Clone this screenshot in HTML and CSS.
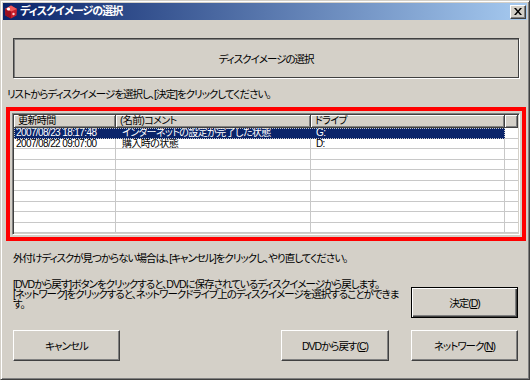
FILE: index.html
```html
<!DOCTYPE html>
<html lang="ja">
<head>
<meta charset="utf-8">
<link rel="stylesheet" href="styles.css">
</head>
<body>
<div class="window">
  <div class="titlebar">
    <svg class="appicon" width="14" height="14" viewBox="0 0 14 14">
      <polygon points="7,0.5 13,4 12.5,10.5 7,13.5 1.5,10.5 1,4" fill="#c81e2a"/>
      <polygon points="7,0.5 13,4 7,6.5 1,4" fill="#f05a5a"/>
      <polygon points="1,4 7,6.5 7,13.5 1.5,10.5" fill="#9a1020"/>
      <circle cx="4.5" cy="4" r="1.6" fill="#fff"/>
      <circle cx="9.5" cy="9" r="1.2" fill="#ffd0d0"/>
    </svg>
    <span class="title">ディスクイメージの選択</span>
    <span class="closebtn">
      <svg width="8" height="7" viewBox="0 0 8 7"><path d="M0 0h2l2 2.5L6 0h2L5 3.5 8 7H6L4 4.5 2 7H0l3-3.5z" fill="#000"/></svg>
    </span>
  </div>
  <div class="client">
    <div class="banner">ディスクイメージの選択</div>
    <div class="instr">リストからディスクイメージを選択し、[決定]をクリックしてください。</div>
    <div class="redbox">
      <div class="list">
        <div class="lhead">
          <div class="hc c1">更新時間</div>
          <div class="hc c2">(名前)コメント</div>
          <div class="hc c3">ドライブ</div>
          <div class="hc c4"></div>
        </div>
        <div class="row sel">
          <div class="selgroup">
            <div class="cell c1">2007/08/23 18:17:48</div>
            <div class="cell c2">インターネットの設定が完了した状態</div>
            <div class="cell c3">G:</div>
          </div>
          <div class="cell c4"></div>
        </div>
        <div class="row">
          <div class="cell c1">2007/08/22 09:07:00</div>
          <div class="cell c2">購入時の状態</div>
          <div class="cell c3">D:</div>
          <div class="cell c4"></div>
        </div>
        <div class="row"><div class="cell c1"></div><div class="cell c2"></div><div class="cell c3"></div><div class="cell c4"></div></div>
        <div class="row"><div class="cell c1"></div><div class="cell c2"></div><div class="cell c3"></div><div class="cell c4"></div></div>
        <div class="row"><div class="cell c1"></div><div class="cell c2"></div><div class="cell c3"></div><div class="cell c4"></div></div>
        <div class="row"><div class="cell c1"></div><div class="cell c2"></div><div class="cell c3"></div><div class="cell c4"></div></div>
        <div class="row"><div class="cell c1"></div><div class="cell c2"></div><div class="cell c3"></div><div class="cell c4"></div></div>
        <div class="row"><div class="cell c1"></div><div class="cell c2"></div><div class="cell c3"></div><div class="cell c4"></div></div>
        <div class="row"><div class="cell c1"></div><div class="cell c2"></div><div class="cell c3"></div><div class="cell c4"></div></div>
        <div class="row"><div class="cell c1"></div><div class="cell c2"></div><div class="cell c3"></div><div class="cell c4"></div></div>
      </div>
    </div>
    <div class="note">外付けディスクが見つからない場合は、[キャンセル]をクリックし、やり直してください。</div>
    <div class="mid">
      <div class="para">[DVDから戻す]ボタンをクリックすると、DVDに保存されているディスクイメージから戻します。<br>[ネットワーク]をクリックすると、ネットワークドライブ上のディスクイメージを選択することができま<br>す。</div>
      <div class="btn default">決定(<u>D</u>)</div>
    </div>
    <div class="btnrow">
      <div class="btn">キャンセル</div>
      <div class="spacer"></div>
      <div class="btn wide">DVDから戻す(<u>C</u>)</div>
      <div class="btn">ネットワーク(<u>N</u>)</div>
    </div>
  </div>
</div>
</body>
</html>
```

FILE: styles.css
```css
html, body {
  margin: 0;
  padding: 0;
  background: #d4d0c8;
}
body {
  font-family: "Liberation Sans", "Noto Sans CJK JP", sans-serif;
  font-size: 10.5px;
  color: #000;
  font-feature-settings: "palt";
  letter-spacing: -1px;
}
.window {
  box-sizing: border-box;
  width: 530px;
  height: 380px;
  border: 1px solid;
  border-color: #d4d0c8 #404040 #404040 #d4d0c8;
  box-shadow: inset 1px 1px 0 #fff, inset -1px -1px 0 #808080;
  padding: 2px 2px 0 2px;
  display: flex;
  flex-direction: column;
  overflow: hidden;
}
.titlebar {
  height: 17px;
  flex: none;
  display: flex;
  align-items: center;
  background: linear-gradient(to right, #0a246a, #a6caf0);
  padding-left: 1px;
}
.appicon { flex: none; }
.title {
  color: #fff;
  font-weight: bold;
  font-size: 11px;
  margin-left: 2px;
  letter-spacing: -0.9px;
  flex: 1;
  line-height: 17px;
}
.closebtn {
  width: 16px;
  height: 14px;
  box-sizing: border-box;
  background: #d4d0c8;
  border: 1px solid;
  border-color: #fff #404040 #404040 #fff;
  box-shadow: inset -1px -1px 0 #808080;
  display: flex;
  align-items: center;
  justify-content: center;
  margin-right: 1px;
}
.client {
  display: flex;
  flex-direction: column;
}
.banner {
  margin: 18px 8px 0 10px;
  height: 40px;
  box-sizing: border-box;
  border: 1px solid #404040;
  box-shadow: inset 1px 1px 0 #808080, 1px 1px 0 #fff;
  display: flex;
  align-items: center;
  justify-content: center;
}
.instr {
  margin: 10px 0 0 4px;
  line-height: 12px;
  white-space: nowrap;
}
.redbox {
  margin: 7px 0 0 3px;
  width: 520px;
  height: 134px;
  box-sizing: border-box;
  border: 4px solid #ff0000;
  padding: 2px;
}
.list {
  box-sizing: border-box;
  height: 100%;
  background: #fff;
  border: 1px solid;
  border-color: #808080 #fff #fff #808080;
  box-shadow: inset 1px 1px 0 #404040, inset -1px -1px 0 #d4d0c8;
  padding: 1px;
  display: flex;
  flex-direction: column;
  overflow: hidden;
  font-size: 10px;
  letter-spacing: -0.6px;
}
.lhead {
  display: flex;
  height: 13px;
  flex: none;
}
.hc {
  box-sizing: border-box;
  background: #d4d0c8;
  border-right: 1px solid #404040;
  border-bottom: 1px solid #404040;
  box-shadow: inset 1px 1px 0 #fff, inset -1px -1px 0 #808080;
  padding-left: 4px;
  line-height: 11px;
  white-space: nowrap;
}
.c1 { width: 102px; flex: none; }
.c2 { width: 195px; flex: none; }
.c3 { width: 194px; flex: none; }
.c4 { flex: 1; }
.row {
  display: flex;
  height: 10.5px;
  flex: none;
}
.selgroup {
  display: flex;
  flex: none;
  background: #0a246a;
  color: #fff;
  outline: 1px dotted #c8c8c8;
  outline-offset: -1px;
}
.selgroup .cell { border-color: #0a246a; }
.cell {
  box-sizing: border-box;
  border-right: 1px solid #c8c8c8;
  border-bottom: 1px solid #c8c8c8;
  line-height: 10px;
  white-space: nowrap;
  overflow: hidden;
  padding-left: 2px;
}
.c2.cell { padding-left: 6px; }
.c3.cell { padding-left: 5px; }
.c4.cell { border-right: none; }
.note {
  margin: 11px 0 0 10px;
  line-height: 12px;
  white-space: nowrap;
}
.mid {
  display: flex;
  margin-top: 15px;
  align-items: flex-start;
}
.para {
  flex: 1;
  min-width: 0;
  margin-left: 10px;
  line-height: 10px;
  white-space: nowrap;
}
.btn {
  box-sizing: border-box;
  width: 107px;
  height: 31px;
  flex: none;
  background: #d4d0c8;
  border: 1px solid;
  border-color: #fff #404040 #404040 #fff;
  box-shadow: inset -1px -1px 0 #808080;
  display: flex;
  align-items: center;
  justify-content: center;
  white-space: nowrap;
}
.btn.default {
  margin-top: 8px;
  margin-right: 9px;
  border: 1px solid #000;
  box-shadow: inset 1px 1px 0 #fff, inset -1px -1px 0 #404040, inset -2px -2px 0 #808080;
}
.btnrow {
  display: flex;
  margin: 12px 9px 0 10px;
  gap: 22px;
}
.btn.wide { width: 108px; }
.spacer { flex: 1; margin-left: -22px; }
```
